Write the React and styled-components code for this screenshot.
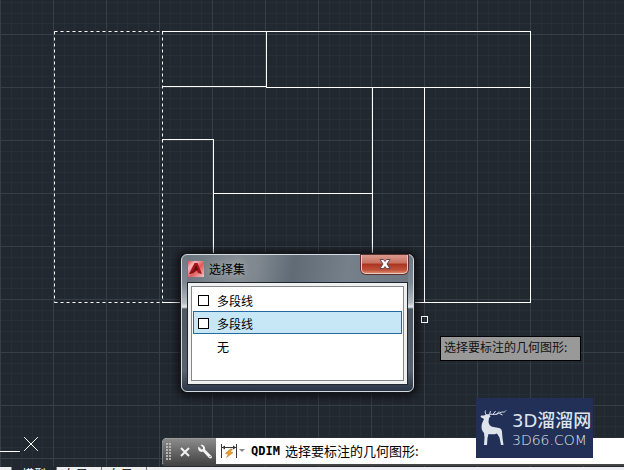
import React, { useState } from "react";
import styled, { createGlobalStyle } from "styled-components";

const planLines = [
  "M162 31H530",
  "M530 31V302",
  "M162 302H530",
  "M266 31V87",
  "M162 86H266",
  "M266 87H530",
  "M372 87V302",
  "M424 87V302",
  "M162 139H213",
  "M213 139V302",
  "M213 193H372",
];

const entities = [
  { id: 1, name: "多段线", box: true },
  { id: 2, name: "多段线", box: true },
  { id: 3, name: "无", box: false },
];

const Drawing = () => (
  <Plan aria-hidden="true">
    <defs>
      <pattern id="grid" width="53" height="53" patternUnits="userSpaceOnUse" y="34">
        {[11, 21, 32, 42].map((n) => (
          <path key={n} d={`M${n}.5 0V53M0 ${n}.5H53`} stroke="#262e37" />
        ))}
        <path d="M.5 0V53M0 .5H53" stroke="#363e48" />
      </pattern>
    </defs>
    <rect width="100%" height="100%" fill="url(#grid)" />
    <g transform="translate(.5 .5)" fill="none" stroke="#fff" strokeLinecap="square">
      {planLines.map((d) => (
        <path key={d} d={d} />
      ))}
      <rect x="421" y="316" width="6" height="6" />
      <path d="M0 451H19" />
      <path d="M24 437L37 450M37 437L24 450" />
    </g>
    <g transform="translate(.5 .5)" fill="none" stroke="#fff" strokeDasharray="3 3">
      <path d="M54 31H162" />
      <path d="M54 302H162" />
      <path d="M54 31V302" />
      <path d="M162 31V302" />
    </g>
  </Plan>
);

const AppLogo = () => (
  <svg width="16" height="16" viewBox="0 0 16 16" aria-hidden="true">
    <defs>
      <linearGradient id="logoBg" x1="0" y1="0" x2="1" y2="1">
        <stop offset="0" stopColor="#d8484c" />
        <stop offset=".25" stopColor="#f3b9b9" />
        <stop offset=".55" stopColor="#dd5a5e" />
        <stop offset="1" stopColor="#f6c4c4" />
      </linearGradient>
    </defs>
    <rect width="16" height="16" fill="url(#logoBg)" />
    <path d="M6.5 2h3L14 13l-4-1-1-2H7l-2 2-4 1z" fill="#a5161b" />
    <path d="M8 4l2 5H6z" fill="#5e0c10" />
    <path d="M1 13l6-5 1 2-3 2z" fill="#7d1115" />
  </svg>
);

const Dialog = ({ onClose }) => {
  const [active, setActive] = useState(2);

  return (
    <Window role="dialog" aria-labelledby="dialogTitle">
      <TitleBar>
        <AppLogo />
        <Title id="dialogTitle">选择集</Title>
        <CloseButton aria-label="关闭" onClick={onClose}>
          <svg width="12" height="10" viewBox="0 0 24 20">
            <path
              d="M2 1h7l3 4 3-4h7l-6 9 6 9h-7l-3-4-3 4H2l6-9z"
              fill="#fff"
              stroke="#5b4a55"
              strokeWidth="2"
            />
          </svg>
        </CloseButton>
      </TitleBar>
      <Client>
        <List>
          {entities.map((item) => (
            <li key={item.id}>
              <Row $active={item.id === active} onClick={() => setActive(item.id)}>
                <Swatch $visible={item.box} />
                {item.name}
              </Row>
            </li>
          ))}
        </List>
      </Client>
    </Window>
  );
};

const CommandLine = () => (
  <CommandBar>
    <Tools>
      <svg width="5" height="17" viewBox="0 0 5 17" aria-hidden="true">
        {[0, 3, 6, 9, 12, 15].map((y) => (
          <path key={y} d={`M0 ${y}h2v2h-2zM3 ${y}h2v2h-2z`} fill="#b5b5b5" />
        ))}
      </svg>
      <ToolButton aria-label="关闭命令行">
        <svg width="10" height="10" viewBox="0 0 10 10">
          <path d="M1 1L9 9M9 1L1 9" stroke="#f2f2f2" strokeWidth="2" />
        </svg>
      </ToolButton>
      <ToolButton aria-label="自定义">
        <svg width="14" height="15" viewBox="0 0 28 30">
          <path
            d="M5 2l5 5v3l-3 1-6-6C-1 9 1 13 4 15c2 1 4 1 6 0l12 13c2 1 4 1 5 0s1-3 0-4L14 11c1-4-1-7-4-9-1-1-3-1-5 0z"
            fill="#f4f4f4"
          />
          <path d="M23 25h2" stroke="#555" strokeWidth="2" />
        </svg>
      </ToolButton>
    </Tools>
    <RecentButton aria-label="最近使用的命令">
      <svg width="25" height="16" viewBox="0 0 50 32">
        <path d="M1 2v28M31 2v28M2 9h28" stroke="#3a3a3a" strokeWidth="2" />
        <path d="M2 9l6-4v8zM30 9l-6-4v8z" fill="#333" />
        <path d="M19 12L9 21l6 1-4 7 13-10-6-1 5-6z" fill="#f0a020" stroke="#a8691a" />
        <path d="M36 12h12l-6 6z" fill="#888" />
      </svg>
    </RecentButton>
    <Command>QDIM</Command>
    <Prompt>选择要标注的几何图形:</Prompt>
  </CommandBar>
);

const Watermark = () => (
  <Brand>
    <Deer viewBox="0 0 54 72" aria-hidden="true">
      <path
        d="M2 11h6l4-2c3-1 5 0 7 1l2 3-3 3-1 8c1 6 4 9 10 10l11 2c4 1 6 4 6 8l1 12 2 14h-5l-3-15-5-8c-5 2-11 2-17 1l-2 8-1 14H8l1-15-1-9c-5-5-6-12-4-19l4-9-7-4z"
        fill="#dfe3ec"
      />
      <path
        d="M13 10C10 7 10 4 11 1M16 10c4-4 12 1 18-2 5-1 7-4 11-4 4 1 5-1 7-3M19 9l2-7M26 9l5-7M33 9l5-6M39 7l6 3"
        fill="none"
        stroke="#dfe3ec"
        strokeWidth="2"
      />
    </Deer>
    <BrandText>
      <BrandName>
        <span>3D</span>溜溜网
      </BrandName>
      <BrandUrl>3D66.COM</BrandUrl>
    </BrandText>
  </Brand>
);

const App = () => {
  const [open, setOpen] = useState(true);

  return (
    <Page>
      <GlobalStyle />
      <Canvas>
        <Drawing />
        {open && <Dialog onClose={() => setOpen(false)} />}
        <Tip role="tooltip">选择要标注的几何图形:</Tip>
        <CommandLine />
        <Watermark />
      </Canvas>
      <Tabs>
        <TabArrow aria-label="最后一个">▸</TabArrow>
        <Tab $current>模型</Tab>
        <Tab>布局1</Tab>
        <Tab>布局2</Tab>
      </Tabs>
    </Page>
  );
};

export default App;

const GlobalStyle = createGlobalStyle`
  * {
    box-sizing: border-box;
  }
  body {
    margin: 0;
    background: #222831;
    font-family: "Noto Sans CJK SC", sans-serif;
    font-size: 12px;
  }
  button {
    font: inherit;
    padding: 0;
    border: none;
    background: none;
    cursor: pointer;
  }
`;
const Page = styled.div`
  height: 100vh;
  overflow: hidden;
  display: flex;
  flex-direction: column;
`;
const Canvas = styled.main`
  position: relative;
  flex: 1;
  background: #222830;
`;
const Plan = styled.svg`
  display: block;
  position: absolute;
  width: 100%;
  height: 100%;
`;
const Window = styled.section`
  position: absolute;
  left: 181px;
  top: 254px;
  width: 233px;
  height: 138px;
  display: flex;
  flex-direction: column;
  padding: 0 5px 6px;
  border: 1px solid #d5dae0;
  border-radius: 6px;
  background: linear-gradient(#6e7882 0, #7c8791 28px, #b5bcc4 48px, #e4e8ec 52px, #4c5761 54px, #59636f 85%, #2a3445);
  box-shadow: 0 0 0 1px #14181d, 0 1px 10px 3px rgba(0, 0, 0, 0.7);
`;
const TitleBar = styled.header`
  flex: 0 0 27px;
  display: flex;
  align-items: center;
  gap: 5px;
  padding-left: 1px;
  background: linear-gradient(100deg, #6c767f 0, #858d93 22%, #7f888f 32%, #606b76 48%, #75808a 72%, #6d7882 100%);
`;
const Title = styled.h1`
  flex: 1;
  margin: 0;
  font-size: 12px;
  line-height: 18px;
  font-weight: 400;
  color: #000;
  text-shadow: 0 0 8px rgba(255, 255, 255, 0.5);
`;
const CloseButton = styled.button`
  align-self: flex-start;
  display: flex;
  align-items: center;
  justify-content: center;
  width: 47px;
  height: 19px;
  border: 1px solid #e9c9c2;
  border-top: none;
  border-radius: 0 0 5px 5px;
  background: linear-gradient(#d99a8d 0, #c87060 45%, #a93420 50%, #c0543c 85%, #dc8a6c);
  box-shadow: 0 0 0 1px #5a3030;
`;
const Client = styled.div`
  flex: 1;
  display: flex;
  padding: 3px;
  border: 1px solid #20262d;
  background: #f0f0f0;
`;
const List = styled.ul`
  flex: 1;
  margin: 0;
  padding: 1px;
  list-style: none;
  border: 1px solid #828790;
  background: #fff;
`;
const Row = styled.button`
  display: flex;
  align-items: center;
  gap: 8px;
  width: 100%;
  height: 23px;
  padding: 2px 4px 0;
  line-height: 18px;
  color: #000;
  border: 1px solid ${(props) => (props.$active ? "#26699e" : "transparent")};
  background: ${(props) => (props.$active ? "#c7e7f7" : "#fff")};
`;
const Swatch = styled.span`
  width: 11px;
  height: 11px;
  border: 1px solid #000;
  background: #fff;
  visibility: ${(props) => (props.$visible ? "visible" : "hidden")};
`;
const Tip = styled.div`
  position: absolute;
  left: 440px;
  top: 336px;
  width: 141px;
  height: 25px;
  padding: 0 3px;
  border: 1px solid #000;
  background: #999;
  color: #111;
  line-height: 20px;
  white-space: nowrap;
`;
const CommandBar = styled.div`
  position: absolute;
  left: 162px;
  right: 0;
  bottom: 1px;
  height: 28px;
  display: flex;
  align-items: center;
  border-bottom: 2px solid #444;
  border-radius: 5px 0 0 3px;
  overflow: hidden;
  background: #fff;
  color: #000;
`;
const Tools = styled.div`
  display: flex;
  align-items: center;
  align-self: stretch;
  justify-content: space-between;
  width: 54px;
  padding: 0 4px 0 3px;
  border-top: 1px solid #999;
  border-left: 1px solid #888;
  background: linear-gradient(#8b8b8b, #444);
`;
const ToolButton = styled.button`
  display: flex;
  flex: none;
`;
const RecentButton = styled.button`
  display: flex;
  margin: 0 5px;
`;
const Command = styled.b`
  font-family: "DejaVu Sans Mono", monospace;
  font-size: 12px;
`;
const Prompt = styled.span`
  margin-left: 5px;
  font-size: 13px;
  line-height: 20px;
`;
const Brand = styled.div`
  position: absolute;
  left: 476px;
  bottom: 9px;
  width: 117px;
  height: 60px;
  display: flex;
  align-items: center;
  gap: 5px;
  padding: 0 4px;
  background: #223057;
  color: #dfe3ec;
`;
const Deer = styled.svg`
  flex: none;
  width: 27px;
  height: 36px;
`;
const BrandText = styled.div`
  white-space: nowrap;
`;
const BrandName = styled.div`
  font-size: 18px;
  line-height: 22px;
  font-weight: 500;
  span {
    font-family: "DejaVu Sans", sans-serif;
    font-weight: 400;
  }
`;
const BrandUrl = styled.div`
  font-family: "DejaVu Sans", sans-serif;
  font-weight: 200;
  font-size: 14px;
  line-height: 16px;
`;
const Tabs = styled.nav`
  flex: 0 0 3px;
  overflow: hidden;
  display: flex;
  align-items: flex-start;
  background: #eceef0;
`;
const TabArrow = styled.button`
  width: 12px;
  height: 14px;
  line-height: 14px;
  color: #555;
  border-right: 1px solid #888;
`;
const Tab = styled.button`
  width: 45px;
  height: 14px;
  line-height: 14px;
  border-right: 1px solid #777;
  color: ${(props) => (props.$current ? "#fff" : "#000")};
  background: ${(props) => (props.$current ? "#222830" : "#eceef0")};
`;
